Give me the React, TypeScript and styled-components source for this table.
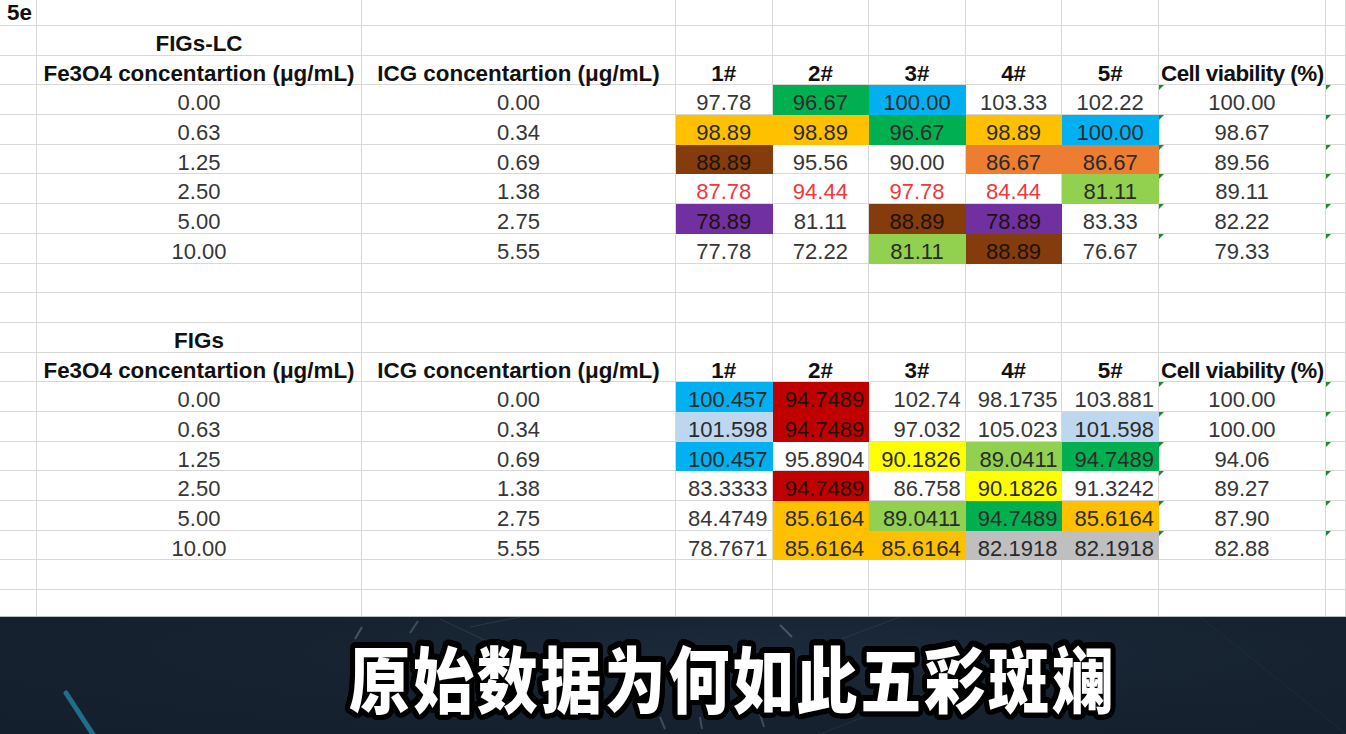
import React from 'react';
import styled, { createGlobalStyle } from 'styled-components';

const GlobalStyle = createGlobalStyle`
  html, body { margin: 0; padding: 0; background: #ffffff; }
  body { width: 1346px; height: 734px; overflow: hidden; font-family: "Liberation Sans", Arial, sans-serif; }
`;

const Page = styled.div`
  display: flex;
  flex-direction: column;
  width: 1346px;
  height: 734px;
  overflow: hidden;
`;

const Sheet = styled.div`
  display: grid;
  grid-template-columns: 37px 325px 314px repeat(5, 96.6px) 167px 1fr;
  grid-template-rows: 26px;
  grid-auto-rows: 29.7px;
  height: 617px;
  flex: none;
  overflow: hidden;
  background: #ffffff;
  border-bottom: 1px solid #b9bec4;
  box-sizing: border-box;
`;

type Align = 'left' | 'center' | 'right';

const Cell = styled.div<{ $fill?: string; $align?: Align; $bold?: boolean; $color?: string; $tick?: boolean; $tight?: boolean }>`
  position: relative;
  box-sizing: border-box;
  border-right: 1px solid ${(p) => p.$fill || '#d8d8d8'};
  border-bottom: 1px solid ${(p) => p.$fill || '#d8d8d8'};
  background: ${(p) => p.$fill || 'transparent'};
  color: ${(p) => (p.$bold ? '#111111' : p.$color || '#363636')};
  font-family: "Liberation Sans", Arial, sans-serif;
  font-size: ${(p) => (p.$bold ? '22.4px' : '22px')};
  font-weight: ${(p) => (p.$bold ? 700 : 400)};
  letter-spacing: ${(p) => (p.$tight ? '-0.5px' : '0')};
  line-height: 24px;
  padding: 6px ${(p) => (p.$align === 'right' ? '4px' : '0')} 0 ${(p) => (p.$align === 'left' ? (p.$tight ? '2px' : '7px') : '0')};
  text-align: ${(p) => p.$align || 'center'};
  white-space: nowrap;
  overflow: visible;
  z-index: ${(p) => (p.$bold ? 1 : 0)};
  &::before {
    content: '';
    display: ${(p) => (p.$tick ? 'block' : 'none')};
    position: absolute;
    left: 0;
    top: 0;
    width: 0;
    height: 0;
    border-top: 5px solid #1e8a2e;
    border-right: 5px solid transparent;
  }
`;

const CornerCell = styled(Cell)`
  padding-top: 1px;
`;

const Banner = styled.div`
  position: relative;
  flex: 1;
  display: flex;
  align-items: center;
  padding-left: 349px;
  background: radial-gradient(ellipse at 60% 30%, #1b2a3b 0%, #16222f 45%, #131f2c 100%);
  overflow: hidden;
`;

const Decor = styled.svg`
  position: absolute;
  inset: 0;
  width: 100%;
  height: 100%;
  pointer-events: none;
`;

const ring = (() => {
  const parts: string[] = [];
  const r = 5;
  for (let i = 0; i < 32; i++) {
    const a = (i / 32) * Math.PI * 2;
    parts.push(`${(Math.cos(a) * r).toFixed(2)}px ${(Math.sin(a) * r).toFixed(2)}px 0 #000`);
  }
  for (let i = 0; i < 16; i++) {
    const a = (i / 16) * Math.PI * 2;
    parts.push(`${(Math.cos(a) * 2.5).toFixed(2)}px ${(Math.sin(a) * 2.5).toFixed(2)}px 0 #000`);
  }
  return parts.join(', ');
})();

const Caption = styled.span`
  position: relative;
  display: inline-block;
  font-family: "Noto Sans CJK SC", "Noto Sans CJK JP", sans-serif;
  font-weight: 900;
  font-size: 61px;
  letter-spacing: 2.9px;
  line-height: 1;
  color: #ffffff;
  transform: scaleY(1.17);
  transform-origin: center;
  text-shadow: ${ring};
  margin-top: 0;
`;

type CellSpec = { t?: string; fill?: string; color?: string; align?: Align; bold?: boolean; tick?: boolean; tight?: boolean; corner?: boolean };

const GREEN = '#00b050';
const BLUE = '#00b0f0';
const GOLD = '#ffc000';
const BROWN = '#843c0c';
const ORANGE = '#ed7d31';
const LGREEN = '#92d050';
const PURPLE = '#7030a0';
const RED = '#c00000';
const LBLUE = '#bdd7ee';
const YELLOW = '#ffff00';
const GRAY = '#bfbfbf';
const REDTEXT = '#ee3a3a';

type V = [string, string?, string?];

const lcData: { fe: string; icg: string; v: V[]; cv: string }[] = [
  { fe: '0.00', icg: '0.00', v: [['97.78'], ['96.67', GREEN], ['100.00', BLUE], ['103.33'], ['102.22']], cv: '100.00' },
  { fe: '0.63', icg: '0.34', v: [['98.89', GOLD], ['98.89', GOLD], ['96.67', GREEN], ['98.89', GOLD], ['100.00', BLUE]], cv: '98.67' },
  { fe: '1.25', icg: '0.69', v: [['88.89', BROWN], ['95.56'], ['90.00'], ['86.67', ORANGE], ['86.67', ORANGE]], cv: '89.56' },
  { fe: '2.50', icg: '1.38', v: [['87.78', undefined, REDTEXT], ['94.44', undefined, REDTEXT], ['97.78', undefined, REDTEXT], ['84.44', undefined, REDTEXT], ['81.11', LGREEN]], cv: '89.11' },
  { fe: '5.00', icg: '2.75', v: [['78.89', PURPLE], ['81.11'], ['88.89', BROWN], ['78.89', PURPLE], ['83.33']], cv: '82.22' },
  { fe: '10.00', icg: '5.55', v: [['77.78'], ['72.22'], ['81.11', LGREEN], ['88.89', BROWN], ['76.67']], cv: '79.33' },
];

const figData: { fe: string; icg: string; v: V[]; cv: string }[] = [
  { fe: '0.00', icg: '0.00', v: [['100.457', BLUE], ['94.7489', RED], ['102.74'], ['98.1735'], ['103.881']], cv: '100.00' },
  { fe: '0.63', icg: '0.34', v: [['101.598', LBLUE], ['94.7489', RED], ['97.032'], ['105.023'], ['101.598', LBLUE]], cv: '100.00' },
  { fe: '1.25', icg: '0.69', v: [['100.457', BLUE], ['95.8904'], ['90.1826', YELLOW], ['89.0411', LGREEN], ['94.7489', GREEN]], cv: '94.06' },
  { fe: '2.50', icg: '1.38', v: [['83.3333'], ['94.7489', RED], ['86.758'], ['90.1826', YELLOW], ['91.3242']], cv: '89.27' },
  { fe: '5.00', icg: '2.75', v: [['84.4749'], ['85.6164', GOLD], ['89.0411', LGREEN], ['94.7489', GREEN], ['85.6164', GOLD]], cv: '87.90' },
  { fe: '10.00', icg: '5.55', v: [['78.7671'], ['85.6164', GOLD], ['85.6164', GOLD], ['82.1918', GRAY], ['82.1918', GRAY]], cv: '82.88' },
];

const empty = (): CellSpec[] => Array.from({ length: 10 }, () => ({}));

const textOn = (fill?: string) => {
  if (fill === BROWN || fill === PURPLE || fill === RED) return '#1e1208';
  if (fill) return '#2a2a2a';
  return undefined;
};

function buildRows(): CellSpec[][] {
  const rows: CellSpec[][] = [];
  const r0 = empty();
  r0[0] = { t: '5e', bold: true, align: 'left', corner: true };
  rows.push(r0);

  const section = (title: string, data: typeof lcData, right: boolean) => {
    const t = empty();
    t[1] = { t: title, bold: true };
    rows.push(t);
    const h = empty();
    h[1] = { t: 'Fe3O4 concentartion (μg/mL)', bold: true };
    h[2] = { t: 'ICG concentartion (μg/mL)', bold: true };
    for (let i = 0; i < 5; i++) h[3 + i] = { t: `${i + 1}#`, bold: true };
    h[8] = { t: 'Cell viability (%)', bold: true, align: 'left', tight: true };
    rows.push(h);
    data.forEach((d) => {
      const r = empty();
      r[1] = { t: d.fe };
      r[2] = { t: d.icg };
      d.v.forEach(([val, fill, color], i) => {
        r[3 + i] = { t: val, fill, color: color || textOn(fill), align: right ? 'right' : 'center' };
      });
      r[8] = { t: d.cv, tick: true };
      r[9] = { tick: true };
      rows.push(r);
    });
  };

  section('FIGs-LC', lcData, false);
  rows.push(empty());
  rows.push(empty());
  section('FIGs', figData, true);
  rows.push(empty());
  rows.push(empty());
  return rows;
}

const rows = buildRows();

export default function App() {
  return (
    <>
      <GlobalStyle />
      <Page>
        <Sheet>
          {rows.map((r, ri) =>
            r.map((c, ci) => {
              const Comp = c.corner ? CornerCell : Cell;
              return (
                <Comp
                  key={`${ri}-${ci}`}
                  $fill={c.fill}
                  $color={c.color}
                  $align={c.align}
                  $bold={c.bold}
                  $tick={c.tick}
                  $tight={c.tight}
                >
                  {c.t}
                </Comp>
              );
            })
          )}
        </Sheet>
        <Banner>
          <Decor viewBox="0 0 1346 117" preserveAspectRatio="none">
            <line x1="66" y1="76" x2="98" y2="125" stroke="#1f6f8c" strokeWidth="5" strokeLinecap="round" />
            <line x1="355" y1="22" x2="362" y2="10" stroke="#9fb3c6" strokeOpacity="0.35" strokeWidth="2" />
            <line x1="410" y1="16" x2="418" y2="4" stroke="#9fb3c6" strokeOpacity="0.3" strokeWidth="2" />
            <line x1="440" y1="2" x2="520" y2="40" stroke="#9fb3c6" strokeOpacity="0.15" strokeWidth="1" />
            <line x1="470" y1="10" x2="520" y2="0" stroke="#9fb3c6" strokeOpacity="0.15" strokeWidth="1" />
            <line x1="780" y1="8" x2="792" y2="20" stroke="#9fb3c6" strokeOpacity="0.35" strokeWidth="2" />
            <line x1="820" y1="30" x2="900" y2="0" stroke="#9fb3c6" strokeOpacity="0.12" strokeWidth="1" />
            <line x1="820" y1="117" x2="1020" y2="40" stroke="#9fb3c6" strokeOpacity="0.1" strokeWidth="1" />
            <line x1="660" y1="100" x2="665" y2="112" stroke="#9fb3c6" strokeOpacity="0.3" strokeWidth="2" />
            <line x1="700" y1="100" x2="702" y2="112" stroke="#9fb3c6" strokeOpacity="0.3" strokeWidth="2" />
            <line x1="760" y1="97" x2="764" y2="110" stroke="#9fb3c6" strokeOpacity="0.3" strokeWidth="2" />
            <line x1="1200" y1="0" x2="1346" y2="117" stroke="#9fb3c6" strokeOpacity="0.06" strokeWidth="1" />
          </Decor>
          <Caption>原始数据为何如此五彩斑斓</Caption>
        </Banner>
      </Page>
    </>
  );
}
